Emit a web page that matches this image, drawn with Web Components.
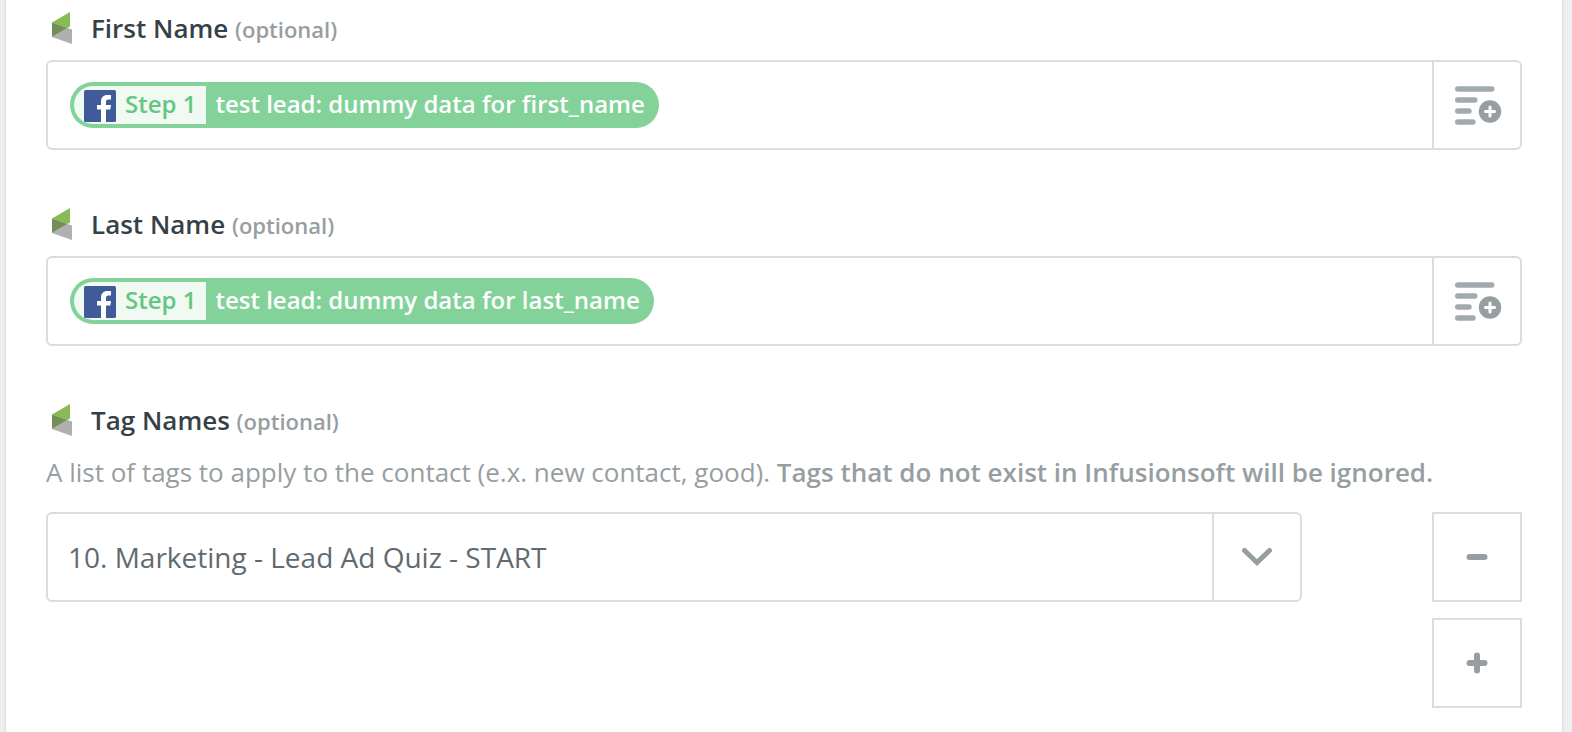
<!DOCTYPE html>
<html lang="en">
<head>
  <meta charset="UTF-8">
  <meta name="viewport" content="width=device-width, initial-scale=1.0">
  <title>Edit Template</title>
  <style>
    html, body {
      margin: 0;
      min-height: 100%;
    }
    body {
      background: #ecf0f1;
      font-family: 'Open Sans', 'Noto Sans', sans-serif;
      color: #354147;
      --border: #d9dde1;
      --muted: #979ea1;
      --green: #82d299;
    }
  </style>
</head>
<body>
  <template-panel>
    <mapped-field label="First Name">
      <step-pill step="Step 1">test lead: dummy data for first_name</step-pill>
    </mapped-field>
    <mapped-field label="Last Name">
      <step-pill step="Step 1">test lead: dummy data for last_name</step-pill>
    </mapped-field>
    <tag-field label="Tag Names" value="10. Marketing - Lead Ad Quiz - START">
      A list of tags to apply to the contact (e.x. new contact, good).
      <strong>Tags that do not exist in Infusionsoft will be ignored.</strong>
    </tag-field>
  </template-panel>

  <script>
    // Label row, shared by both kinds of field
    const labelStyles = `
      :host {
        display: block;
      }
      * {
        box-sizing: border-box;
      }
      .label-row {
        display: flex;
        align-items: center;
        gap: 19px;
        height: 32px;
        padding-left: 6px;
        margin-bottom: 16px;
      }
      label {
        font-size: 26px;
        line-height: 32px;
        font-weight: 600;
        white-space: nowrap;
      }
      .optional {
        font-size: 22px;
        color: var(--muted);
      }
    `;

    const labelRow = (text) => `
      <div class="label-row">
        <infusion-icon></infusion-icon>
        <label for="control">${text} <span class="optional">(optional)</span></label>
      </div>
    `;

    class InfusionIcon extends HTMLElement {
      connectedCallback() {
        this.attachShadow({ mode: 'open' });
        this.shadowRoot.innerHTML = `
          <style>
            :host {
              display: block;
              flex: none;
            }
            svg {
              display: block;
            }
          </style>
          <svg width="20" height="32" viewBox="0 0 20 32" aria-hidden="true">
            <path fill="#b0b0b1" d="M0 25 15.5 16 20 17.5V32Z"/>
            <path fill="#88bb55" d="M0 10.500 18 0V14.500L15.500 16 0 10.500Z"/>
            <path fill="#728f58" d="M0 10.500 15.500 16 0 25Z"/>
          </svg>
        `;
      }
    }

    class StepPill extends HTMLElement {
      connectedCallback() {
        this.attachShadow({ mode: 'open' });
        this.shadowRoot.innerHTML = `
          <style>
            :host {
              display: flex;
              flex: none;
              height: 38px;
              padding: 4px;
              border-radius: 23px;
              background: var(--green);
              color: #fff;
              font-size: 24px;
              line-height: 36px;
              font-weight: 600;
              white-space: nowrap;
            }
            .step {
              display: flex;
              gap: 9px;
              padding: 0 10px;
              border-radius: 19px 0 0 19px;
              background: #f0f9f2;
              color: #63c77f;
            }
            svg {
              display: block;
              margin-top: 4px;
            }
            .value {
              padding: 0 10px 0 9px;
            }
          </style>
          <span class="step">
            <svg width="32" height="32" viewBox="0 0 32 32" aria-hidden="true">
              <rect width="32" height="32" rx="1.500" fill="#415a99"/>
              <path fill="#fff" d="M17 32V19.500H13V15H17V11.500C17 7.500 19.500 5 23.500 5H27V9.500H24.500C22.500 9.500 22 10.500 22 12V15H27L26.300 19.500H22V32Z"/>
            </svg>
            ${this.getAttribute('step')}
          </span>
          <span class="value"><slot></slot></span>
        `;
      }
    }

    class MappedField extends HTMLElement {
      connectedCallback() {
        this.attachShadow({ mode: 'open' });
        this.shadowRoot.innerHTML = `
          <style>
            ${labelStyles}
            .box {
              display: flex;
              height: 90px;
              border: 2px solid var(--border);
              border-radius: 6px;
              background: #fff;
            }
            .entry {
              display: flex;
              flex: 1;
              align-items: center;
              min-width: 0;
              padding: 0 22px;
            }
            input {
              flex: 1;
              min-width: 0;
              height: 46px;
              border: 0;
              outline: 0;
              background: none;
              font: inherit;
              font-size: 24px;
              color: inherit;
            }
            button {
              display: flex;
              align-items: center;
              justify-content: center;
              width: 88px;
              padding: 0;
              border: 0;
              border-left: 2px solid var(--border);
              background: none;
              cursor: pointer;
            }
          </style>
          ${labelRow(this.getAttribute('label'))}
          <div class="box">
            <div class="entry">
              <slot></slot>
              <input id="control" type="text">
            </div>
            <button type="button" aria-label="Insert a field">
              <svg width="50" height="40" viewBox="0 0 50 40" aria-hidden="true">
                <g stroke="#a3aaad" stroke-width="5.400" stroke-linecap="round">
                  <path d="M5.700 4H39.800M5.700 15H22.800M5.700 26H17M5.700 37H21"/>
                </g>
                <circle cx="38" cy="26.500" r="11.200" fill="#979ea1"/>
                <path stroke="#fff" stroke-width="3" stroke-linecap="round" d="M33.500 26.500H42.500M38 22V31"/>
              </svg>
            </button>
          </div>
        `;
      }
    }

    class TagField extends HTMLElement {
      connectedCallback() {
        this.attachShadow({ mode: 'open' });
        this.shadowRoot.innerHTML = `
          <style>
            ${labelStyles}
            .help {
              margin: 0 0 20px;
              font-size: 26px;
              line-height: 40px;
              color: var(--muted);
            }
            ::slotted(strong) {
              font-weight: 600;
            }
            .row {
              display: flex;
              align-items: flex-start;
              justify-content: space-between;
              gap: 130px;
            }
            .dropdown {
              display: grid;
              flex: 1;
              min-width: 0;
            }
            select, .arrow {
              grid-area: 1 / 1;
            }
            select {
              appearance: none;
              width: 100%;
              height: 90px;
              padding: 0 110px 0 20px;
              border: 2px solid var(--border);
              border-radius: 6px;
              background: #fff;
              font: inherit;
              font-size: 28px;
              color: #5f6b70;
            }
            .arrow {
              display: flex;
              align-items: center;
              justify-content: center;
              justify-self: end;
              width: 88px;
              border-left: 2px solid var(--border);
              margin: 2px 2px 2px 0;
              pointer-events: none;
            }
            .actions {
              display: flex;
              flex-direction: column;
              gap: 16px;
            }
            button {
              display: flex;
              align-items: center;
              justify-content: center;
              width: 90px;
              height: 90px;
              padding: 0;
              border: 2px solid var(--border);
              background: #fff;
              cursor: pointer;
            }
            svg {
              display: block;
              fill: none;
              stroke: var(--muted);
              stroke-width: 6;
              stroke-linecap: round;
            }
          </style>
          ${labelRow(this.getAttribute('label'))}
          <p class="help" id="help"><slot></slot></p>
          <div class="row">
            <div class="dropdown">
              <select id="control" aria-describedby="help">
                <option>${this.getAttribute('value')}</option>
              </select>
              <span class="arrow">
                <svg width="32" height="20" viewBox="0 0 32 20" aria-hidden="true">
                  <path stroke-width="5" d="M3.500 3.500 16 15.500 28.500 3.500"/>
                </svg>
              </span>
            </div>
            <div class="actions">
              <button type="button" aria-label="Remove tag">
                <svg width="22" height="22" viewBox="0 0 22 22"><path d="M3.500 11H18.500"/></svg>
              </button>
              <button type="button" aria-label="Add tag">
                <svg width="22" height="22" viewBox="0 0 22 22"><path d="M3.500 11H18.500M11 3.500V18.500"/></svg>
              </button>
            </div>
          </div>
        `;
      }
    }

    class TemplatePanel extends HTMLElement {
      connectedCallback() {
        this.attachShadow({ mode: 'open' });
        this.shadowRoot.innerHTML = `
          <style>
            :host {
              display: flex;
              flex-direction: column;
              gap: 58px;
              box-sizing: border-box;
              min-height: 100vh;
              margin: 0 9px 0 5px;
              padding: 12px 40px 24px;
              border: solid #dde2e4;
              border-width: 0 1px;
              background: #fff;
              box-shadow: 0 0 2px #dde2e4;
            }
          </style>
          <slot></slot>
        `;
      }
    }

    customElements.define('infusion-icon', InfusionIcon);
    customElements.define('step-pill', StepPill);
    customElements.define('mapped-field', MappedField);
    customElements.define('tag-field', TagField);
    customElements.define('template-panel', TemplatePanel);
  </script>
</body>
</html>
